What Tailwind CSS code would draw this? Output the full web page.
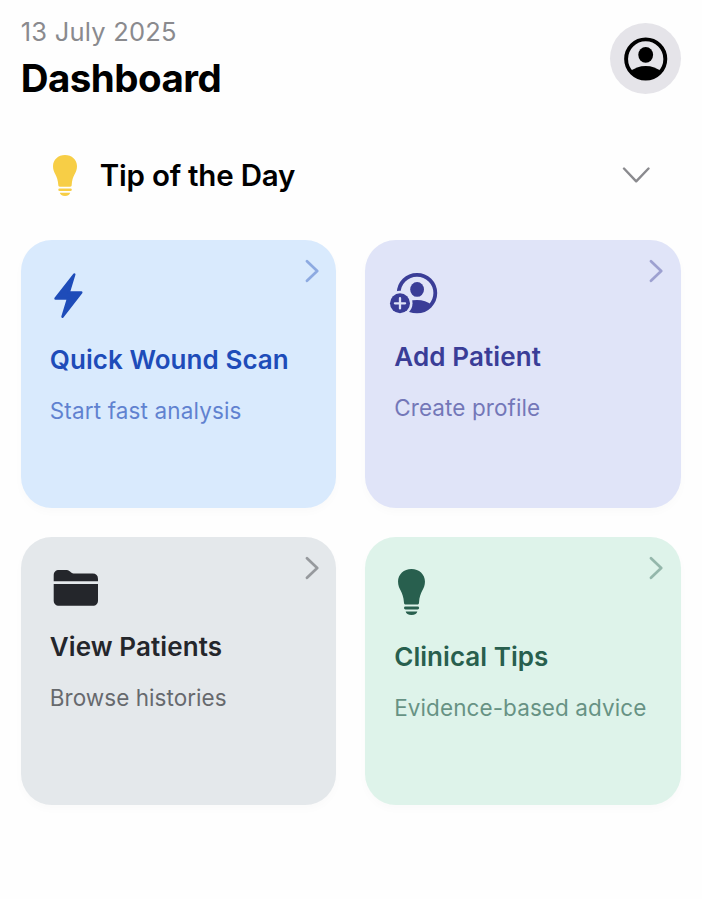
<!DOCTYPE html>
<html lang="en">
<head>
<meta charset="utf-8">
<title>Dashboard</title>
<script src="https://cdn.jsdelivr.net/npm/@tailwindcss/browser@4"></script>
</head>
<body class="bg-[#fefefe] font-['Inter','Liberation_Sans',sans-serif] whitespace-nowrap">
<svg class="hidden">
  <symbol id="bulb" viewBox="3.8 4.2 26.7 45.6">
    <path d="M17.15 4.2C9.6 4.2 3.8 9.6 3.8 16.6c0 8.200 5.300 9.400 5.900 21.100 0 1.200.6 1.800 1.700 1.800h11.500c1.100 0 1.700-.6 1.700-1.800.6-11.700 5.900-12.900 5.900-21.100 0-7-5.800-12.400-13.350-12.400z"/>
    <rect x="9.700" y="41.400" width="15" height="2.900" rx="1.450"/>
    <path d="M11.400 46.300h11.500c-.4 2.100-2.300 3.500-5.750 3.500s-5.350-1.400-5.750-3.500z"/>
  </symbol>
  <symbol id="chev" viewBox="0 0 14 24"><path d="M2 2.300L12.200 12 2 21.700" fill="none" stroke="currentColor" stroke-width="2.700" stroke-linecap="round" stroke-linejoin="round"/></symbol>
</svg>
<main class="w-[702px] h-[899px] px-[20.750px] pt-[15px]">
  <header class="flex justify-between">
    <div>
      <p class="h-[34px] leading-[34px] text-[25.500px] tracking-[0.220px] text-[#8a8a8e]">13 July 2025</p>
      <h1 class="h-[58px] leading-[59px] text-[38.500px] font-bold tracking-[-0.550px] text-black">Dashboard</h1>
    </div>
    <div class="mt-[8px] size-[71px] rounded-full bg-[#e5e4e9] flex items-center justify-center">
      <svg class="size-[44px]" viewBox="0 0 44 44">
        <circle cx="21.700" cy="22" r="19.600" fill="none" stroke="#000" stroke-width="3.900"/>
        <ellipse cx="21.700" cy="17.800" rx="7.400" ry="7.900"/>
        <path d="M6.200 34.500C10.200 31 15.700 29 21.700 29s11.500 2 15.500 5.500A20.500 20.500 0 0 1 6.200 34.500z"/>
      </svg>
    </div>
  </header>

  <section class="mt-[28px] h-[80px] flex items-center pl-[32px] pr-[31px]">
    <svg class="w-[24px] h-[41px] fill-[#f7ce46]"><use href="#bulb"/></svg>
    <h2 class="ml-[23px] text-[29.500px] leading-[36px] font-semibold tracking-[-0.220px] text-black">Tip of the Day</h2>
    <svg class="ml-auto w-[28px] h-[16px]" viewBox="0 0 28 16"><path d="M2 1.500L14.200 14.300 26.500 1.500" fill="none" stroke="#8a8a8e" stroke-width="2.400" stroke-linecap="round" stroke-linejoin="round"/></svg>
  </section>

  <section class="mt-[25px] grid grid-cols-[315.500px_315.500px] gap-[29px]">
    <article class="relative h-[268px] rounded-[31px] bg-[#d9eafd] text-[#1e4cb9] pl-[29px] pt-[28px] shadow-[0_4px_10px_rgba(0,0,0,0.02)]">
      <svg class="absolute right-[17.500px] top-[19px] w-[14px] h-[24px] opacity-40"><use href="#chev"/></svg>
      <svg class="block w-[52px] h-[76px]"><path d="M24.300 6.500L18.800 24.500H31.300L12.500 48.700 18 30.500H5.500z" fill="currentColor" stroke="currentColor" stroke-width="2.400" stroke-linejoin="round"/></svg>
      <h3 class="text-[26px] leading-[32px] font-semibold tracking-[0.060px]">Quick Wound Scan</h3>
      <p class="mt-[21px] text-[22.500px] leading-[28px] tracking-[0.140px] opacity-65">Start fast analysis</p>
    </article>
    <article class="relative h-[268px] rounded-[31px] bg-[#e0e4f8] text-[#3a3d97] pl-[29px] pt-[28px] shadow-[0_4px_10px_rgba(0,0,0,0.02)]">
      <svg class="absolute right-[17.500px] top-[19px] w-[14px] h-[24px] opacity-40"><use href="#chev"/></svg>
      <svg class="block w-[52px] h-[73px] overflow-visible">
        <g transform="translate(0.8 0.6)">
          <circle cx="22.200" cy="24.500" r="18.300" fill="none" stroke="currentColor" stroke-width="3.800"/>
          <ellipse cx="22.300" cy="20.800" rx="6.900" ry="7.400" fill="currentColor"/>
          <path d="M8 36.200C11.500 33 16.500 31.300 22.200 31.300S33 33 36.500 36.200A19.500 19.500 0 0 1 8 36.200z" fill="currentColor"/>
          <circle cx="5.200" cy="34.700" r="12.500" fill="#e0e4f8"/>
          <circle cx="5.200" cy="34.700" r="10" fill="currentColor"/>
          <path d="M5.200 29.600v10.200M.1 34.700H10.300" stroke="#e0e4f8" stroke-width="2.300" stroke-linecap="round"/>
        </g>
      </svg>
      <h3 class="text-[26px] leading-[32px] font-semibold tracking-[0.120px]">Add Patient</h3>
      <p class="mt-[21px] text-[22.500px] leading-[28px] tracking-[0.080px] opacity-65">Create profile</p>
    </article>
    <article class="relative h-[268px] rounded-[31px] bg-[#e4e8eb] text-[#24262b] pl-[29px] pt-[28px] shadow-[0_4px_10px_rgba(0,0,0,0.02)]">
      <svg class="absolute right-[17.500px] top-[19px] w-[14px] h-[24px] opacity-40"><use href="#chev"/></svg>
      <svg class="block w-[52px] h-[66px] fill-current">
        <path d="M3.700 16.200V10.400c0-3.600 1.900-5.500 5.500-5.500h6.300c2 0 3.100.4 4.500 1.600l1.200 1c1 .8 1.700 1.100 3.200 1.100h18.200c3.500 0 5.400 1.900 5.400 5.400v2.200z"/>
        <path d="M3.700 18.900H48V35.300c0 3.600-1.900 5.500-5.400 5.500H9.200c-3.600 0-5.500-1.900-5.500-5.500z"/>
      </svg>
      <h3 class="text-[26px] leading-[32px] font-semibold tracking-[0.100px]">View Patients</h3>
      <p class="mt-[21px] text-[22.500px] leading-[28px] tracking-[0.050px] opacity-65">Browse histories</p>
    </article>
    <article class="relative h-[268px] rounded-[31px] bg-[#def3ea] text-[#285f4e] pl-[29px] pt-[28px] shadow-[0_4px_10px_rgba(0,0,0,0.02)]">
      <svg class="absolute right-[17.500px] top-[19px] w-[14px] h-[24px] opacity-40"><use href="#chev"/></svg>
      <div class="h-[76px] pt-[4px] pl-[3.500px]"><svg class="w-[27px] h-[46px] fill-current"><use href="#bulb"/></svg></div>
      <h3 class="text-[26px] leading-[32px] font-semibold tracking-[0.030px]">Clinical Tips</h3>
      <p class="mt-[21px] text-[22.500px] leading-[28px] tracking-[0.080px] opacity-65">Evidence-based advice</p>
    </article>
  </section>
</main>
</body>
</html>
